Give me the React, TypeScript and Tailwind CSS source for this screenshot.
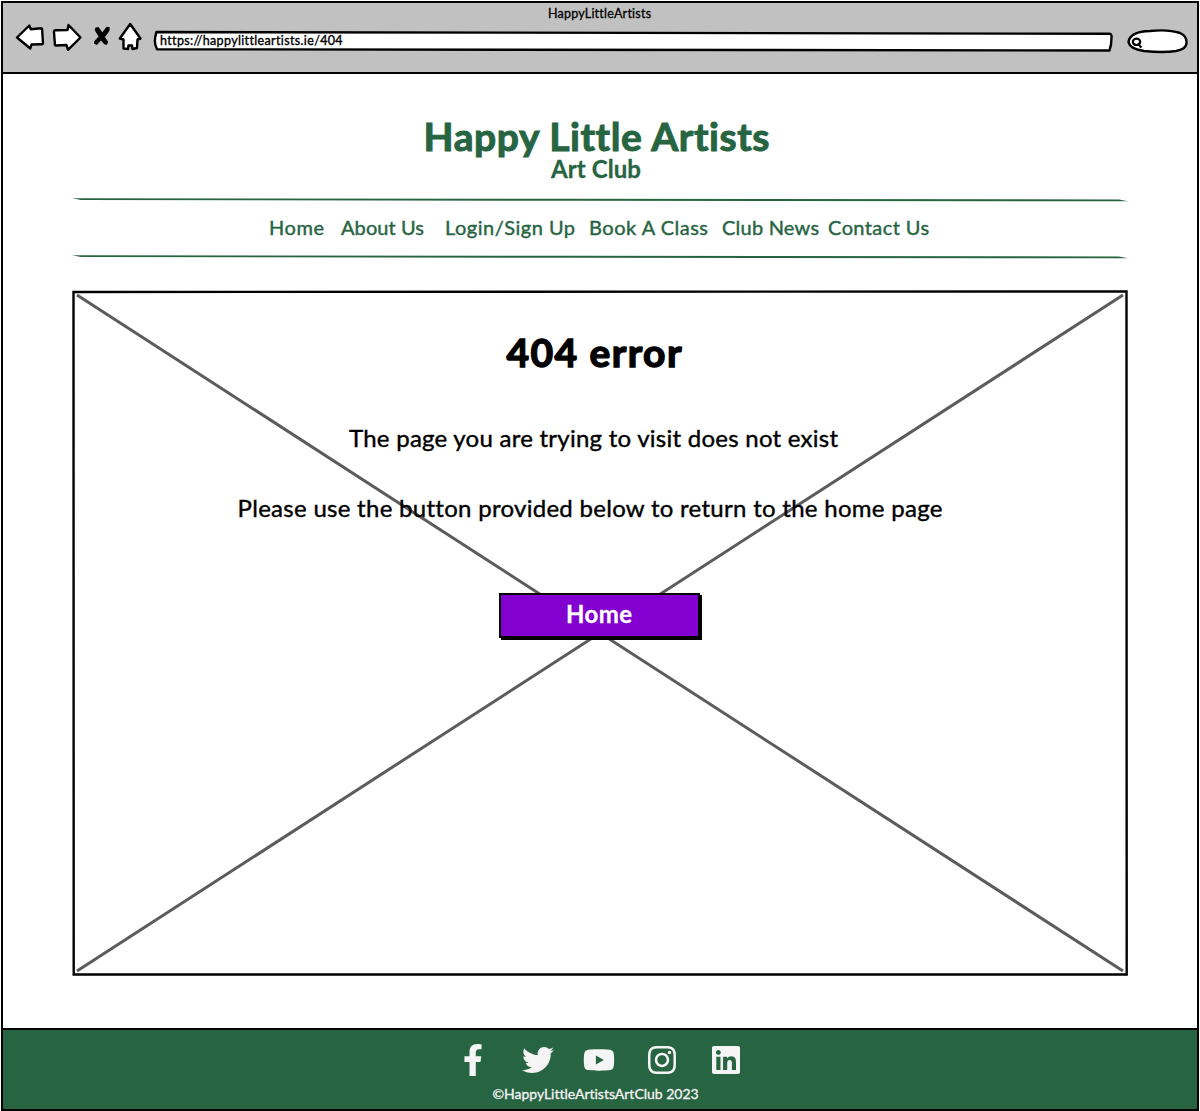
import { useLayoutEffect, useRef } from "react";
import { FaFacebookF, FaTwitter, FaYoutube, FaInstagram, FaLinkedin } from "react-icons/fa";

/** A single line of text whose tracking is tuned so that it spans `width` pixels. */
function Fit({ text, width, className = "" }: { text: string; width: number; className?: string }) {
  const ref = useRef<HTMLSpanElement>(null);
  useLayoutEffect(() => {
    const el = ref.current;
    if (!el) return;
    el.style.letterSpacing = "0px";
    const natural = el.getBoundingClientRect().width;
    const gap = (width - natural) / (text.length - 1);
    el.style.letterSpacing = `${gap}px`;
    el.style.marginRight = `${-gap}px`;
  }, [text, width]);
  return (
    <span ref={ref} className={`inline-block shrink-0 whitespace-nowrap ${className}`}>
      {text}
    </span>
  );
}

function BrowserBar() {
  return (
    <header className="flex h-[71px] flex-col border-b-2 border-black bg-[#c1c1c1]">
      <div className="flex h-6 items-center justify-center pb-px text-[12.5px] leading-none [-webkit-text-stroke:0.3px_black]">
        <Fit text="HappyLittleArtists" width={103} className="-ml-px" />
      </div>
      <div className="flex items-start">
        <svg className="-mt-[5px] ml-3 h-8 w-[130px] shrink-0" viewBox="15 22 130 32" fill="white" stroke="black" strokeWidth="2.4" strokeLinejoin="round">
          <path d="M17 37.500 29.300 25.500 30.800 29.300 41 28.300Q42.500 28.500 42.200 31L43 43Q43 44.500 41 44.200L31.500 44.500 30.300 48.500Z" />
          <path d="M54 32Q53.800 30 56 30.300L67.500 30 68.500 25 80.500 37.500 68 49.800 66.500 45 56 45.500Q54.500 45.500 54.800 43Z" />
          <path d="M95.500 28 98.500 27.500 102.300 33 106.500 27.300 109.300 27.500 109 31 104.500 37 107.800 42 106.500 44.500 104.500 44 101 40 97 44.500 94.500 43.500 94.500 41.500 99 36.500 95.300 30.500Z" fill="black" strokeWidth="0.800" />
          <path d="M130.200 24 140.500 38.500 137.500 39.500 137 48 132.500 49 132 45.500 128.500 45.500 128 49 123.500 48.500 123.500 39.500 119.800 38.500Z" />
        </svg>
        <div className="relative ml-2 mt-[3px] flex h-[22px] w-[960px] shrink-0 items-center">
          <svg className="absolute inset-0 size-full" viewBox="0 0 960 22" fill="white" stroke="black" strokeWidth="2.400" strokeLinejoin="round">
            <path d="M3.500 2Q480 2.800 956.500 3.800Q959 4 958.500 8Q958.500 15 956.500 20.500Q480 20 4 19.200Q0 12 3.500 2Z" />
          </svg>
          <span className="relative ml-[7px] pt-px text-[12.5px] leading-none [-webkit-text-stroke:0.35px_black]">
            <Fit text="https://happylittleartists.ie/404" width={182} />
          </span>
        </div>
        <svg className="ml-[13px] h-7 w-[62px] shrink-0" viewBox="1126 27 62 28" fill="white" stroke="black" strokeWidth="2.400">
          <path d="M1128.500 42Q1130 31.500 1150 31Q1168 29 1180 33Q1187 36 1186.500 43Q1186.500 49 1176 51Q1163 53 1144 51Q1130 49 1128.500 42Z" />
          <ellipse cx="1136.500" cy="41.800" rx="3.700" ry="3.200" strokeWidth="2.200" />
          <path d="M1138 44 1141.500 47.500" strokeWidth="2.200" />
        </svg>
      </div>
    </header>
  );
}

function Rule() {
  return (
    <svg className="h-1 w-[1056px]" viewBox="0 0 1056 4" fill="#276442">
      <path d="M0 .3 9 .3 500 .8 1047 1.500 1056 3.300 1044 3.300 500 2.800 9 2.100Z" />
    </svg>
  );
}

const links = [
  { text: "Home", width: 55, gap: "ml-[197px]" },
  { text: "About Us", width: 83, gap: "ml-[17px]" },
  { text: "Login/Sign Up", width: 130, gap: "ml-[21px]" },
  { text: "Book A Class", width: 119, gap: "ml-[14px]" },
  { text: "Club News", width: 97, gap: "ml-[14px]" },
  { text: "Contact Us", width: 101, gap: "ml-[9px]" },
];

export default function App() {
  return (
    <div className="h-[1111px] w-[1200px] bg-white pl-px pr-px pt-px font-['Lato',sans-serif] text-black">
      <div className="flex h-[1110px] flex-col border-2 border-black">
        <BrowserBar />

        <div className="flex flex-col items-center pl-px pt-[42px] text-[#276442]">
          <h1 className="flex h-[41px] items-center text-[39px] font-bold leading-none [-webkit-text-stroke:1px_#276442]">
            <Fit text="Happy Little Artists" width={345} className="-ml-[8px]" />
          </h1>
          <h2 className="flex h-[23px] items-center text-2xl font-bold leading-none [-webkit-text-stroke:0.3px_#276442]">
            <Fit text="Art Club" width={90} className="-ml-[9px]" />
          </h2>
        </div>

        <div className="ml-[69px] mt-[18px] flex flex-col">
          <Rule />
          <nav className="flex h-[53px] items-center pb-[3px] text-xl leading-none text-[#276442] [-webkit-text-stroke:0.4px_#276442]">
            {links.map((l) => (
              <a key={l.text} className={`flex ${l.gap}`}>
                <Fit text={l.text} width={l.width} />
              </a>
            ))}
          </nav>
          <Rule />
        </div>

        <main className="relative ml-[69px] mt-[31px] flex h-[686px] w-[1056px] flex-col items-center">
          <svg className="absolute inset-0 size-full" viewBox="0 0 1056 686" fill="none">
            <path d="M5 5 1051 681M1051 5 5 681" stroke="#5c5c5c" strokeWidth="3" />
            <path d="M1.500 2 1054.500 1.500 1054.700 684.500 1.700 684.500Z" stroke="black" strokeWidth="2.400" />
          </svg>
          <h1 className="relative mt-[40px] flex h-11 items-center text-[39px] font-bold leading-none [-webkit-text-stroke:1.4px_black]">
            <Fit text="404 error" width={175} className="-ml-[12px]" />
          </h1>
          <p className="relative mt-[48px] flex h-8 items-center text-2xl leading-none [-webkit-text-stroke:0.4px_black]">
            <Fit text="The page you are trying to visit does not exist" width={489} className="-ml-[13px]" />
          </p>
          <p className="relative mt-[38px] flex h-8 items-center text-2xl leading-none [-webkit-text-stroke:0.4px_black]">
            <Fit text="Please use the button provided below to return to the home page" width={704} className="-ml-[20px]" />
          </p>
          <button className="relative mt-[69px] mr-0.5 flex h-[45px] w-[201px] items-center justify-center border-2 border-black bg-[#8200d0] pb-[3px] text-2xl font-bold leading-none text-white shadow-[2px_2px_0_0_black] [-webkit-text-stroke:0.3px_white]">
            <Fit text="Home" width={66} />
          </button>
        </main>

        <footer className="mt-auto flex h-[81px] flex-col items-center border-t-2 border-black bg-[#276442] text-[#f5f5f5]">
          <div className="mt-[14px] flex h-8 w-full items-center text-[32px]">
            <FaFacebookF className="ml-[460px] w-5 shrink-0" />
            <FaTwitter className="ml-[39px] shrink-0" />
            <FaYoutube className="ml-[29px] shrink-0" />
            <FaInstagram className="ml-[31px] shrink-0" />
            <FaLinkedin className="ml-[32px] shrink-0" />
          </div>
          <div className="mt-2 flex h-5 items-center text-[14px] leading-none [-webkit-text-stroke:0.3px_#f5f5f5]">
            <Fit text="©HappyLittleArtistsArtClub 2023" width={206} className="-ml-[9px]" />
          </div>
        </footer>
      </div>
    </div>
  );
}
